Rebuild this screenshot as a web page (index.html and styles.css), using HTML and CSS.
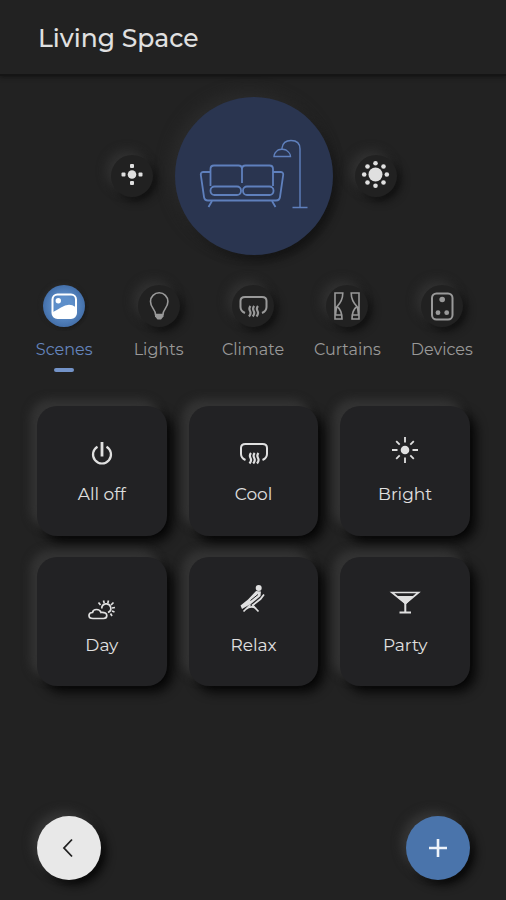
FILE: index.html
```html
<!DOCTYPE html>
<html lang="en">
<head>
<meta charset="utf-8">
<meta name="viewport" content="width=device-width, initial-scale=1">
<title>Living Space</title>
<link rel="stylesheet" href="styles.css">
</head>
<body>
<svg class="defs" aria-hidden="true">
  <symbol id="climate" viewBox="0 0 42 42">
    <path d="M13 28Q8.500 26 8.500 22V16Q8.500 12 13 12H30Q34.500 12 34.500 16V22Q34.500 26 30 28" stroke-width="2"/>
    <path d="M18.500 21q-2 2.500 -.5 5t-1 5.500M22.200 21q-2 2.500 -.5 5t-1 5.500M26 21q-2 2.500 -.5 5t-1 5.500" stroke-width="2.200"/>
  </symbol>
</svg>
<div class="app">
  <header class="topbar"><h1>Living Space</h1></header>
  <main>
    <section class="hero">
      <button class="round" aria-label="Dim">
        <svg viewBox="0 0 42 42"><g class="solid"><circle cx="21" cy="19.500" r="4.300"/><rect x="19" y="9" width="4" height="4" rx="1"/><rect x="19" y="26" width="4" height="4" rx="1"/><rect x="10.500" y="17.500" width="4" height="4" rx="1"/><rect x="27.500" y="17.500" width="4" height="4" rx="1"/></g></svg>
      </button>
      <div class="room">
        <svg viewBox="0 0 158 158">
          <g stroke-width="1.800">
            <path d="M35.500 89V72Q35.500 68.500 39 68.500H63.500Q67 68.500 67 72V86M67 72Q67 68.500 70.500 68.500H94.500Q98 68.500 98 72V89"/>
            <rect x="35.500" y="89.500" width="30.500" height="8.500" rx="4"/>
            <rect x="68" y="89.500" width="30.500" height="8.500" rx="4"/>
            <path d="M35.500 75H28.500Q25.500 75 25.800 78L29 100Q29.500 103.500 33 103.500H101Q104.500 103.500 105 100L108.200 78Q108.500 75 105.500 75H98"/>
            <path d="M37 104L33.500 110M97 104L100.500 110"/>
          </g>
          <g stroke-width="1.400">
            <path d="M107 52.500V51Q108 43.500 116 43.500Q125 43.500 125 52V110.500M117.500 110.500H132.500"/>
            <path d="M99 59.500Q99 56 103 53Q107 51.500 111 53Q115.500 56 115.500 59.500Z"/>
          </g>
        </svg>
      </div>
      <button class="round" aria-label="Brighten">
        <svg viewBox="0 0 42 42"><g class="solid" transform="translate(-.5 -1.500)"><circle cx="21" cy="21" r="7"/><circle cx="21" cy="9.700" r="2.300"/><circle cx="21" cy="32.300" r="2.300"/><circle cx="9.700" cy="21" r="2.300"/><circle cx="32.300" cy="21" r="2.300"/><circle cx="13" cy="13" r="2.300"/><circle cx="29" cy="13" r="2.300"/><circle cx="13" cy="29" r="2.300"/><circle cx="29" cy="29" r="2.300"/></g></svg>
      </button>
    </section>

    <nav class="tabs">
      <button class="tab active" aria-current="page">
        <span class="round"><svg viewBox="0 0 42 42"><rect x="9.500" y="9.500" width="23.500" height="23.500" rx="5" stroke-width="2"/><g class="solid"><circle cx="15.300" cy="15.700" r="2.700"/><path d="M10 27Q14 25 18 22.500Q26 17.500 32.500 22V29Q32.500 33 28 33H14Q10 33 10 29Z"/></g></svg></span>
        <span class="label">Scenes</span>
      </button>
      <button class="tab">
        <span class="round"><svg viewBox="0 0 42 42"><path d="M17.500 29.500C17.500 24 12.500 23 12.500 16.500A8.700 8.700 0 0 1 29.900 16.500C29.900 23 25 24 25 29.500Z" stroke-width="1.600"/><path class="solid" d="M17 29.500H25.500V31.500L23 34.500H19.500L17 31.500Z"/></svg></span>
        <span class="label">Lights</span>
      </button>
      <button class="tab">
        <span class="round"><svg viewBox="0 0 42 42"><use href="#climate" width="42" height="42"/></svg></span>
        <span class="label">Climate</span>
      </button>
      <button class="tab">
        <span class="round"><svg viewBox="0 0 42 42"><g stroke-width="1.600"><path d="M9 8H16.800C16.800 14 14.500 18 11 21.500C14.500 24 16 28 16 34H9ZM10.500 22L9.500 30M9.500 30H15.500"/><path d="M33 8H25.200C25.200 14 27.500 18 31 21.500C27.500 24 26 28 26 34H33ZM31.500 22L32.500 30M32.500 30H26.500"/></g></svg></span>
        <span class="label">Curtains</span>
      </button>
      <button class="tab">
        <span class="round"><svg viewBox="0 0 42 42"><rect x="11" y="8.500" width="20.500" height="26" rx="4.500" stroke-width="2"/><g class="solid"><circle cx="21.200" cy="14.500" r="2.800"/><circle cx="17" cy="27.700" r="2.400"/><circle cx="25.700" cy="27.700" r="2.400"/></g></svg></span>
        <span class="label">Devices</span>
      </button>
    </nav>

    <section class="scenes">
      <button class="card">
        <svg viewBox="0 0 40 40"><path d="M15.500 12.700A9 9 0 1 0 24.500 12.700" stroke-width="2.200"/><path d="M20 8V22.500" stroke-width="2.800"/></svg>
        <span>All off</span>
      </button>
      <button class="card">
        <svg viewBox="0 0 40 40"><use href="#climate" x="-1.500" y="-2" width="42" height="42"/></svg>
        <span>Cool</span>
      </button>
      <button class="card">
        <svg viewBox="0 0 40 40"><circle class="solid" cx="20" cy="16" r="4.300"/><path stroke-width="1.800" d="M20 3V8.500M20 23.500V29M7 16H12.500M27.500 16H33M11.200 7.200L14.700 10.700M25.300 21.300L28.800 24.800M28.800 7.200L25.300 10.700M14.700 21.300L11.200 24.800"/></svg>
        <span>Bright</span>
      </button>
      <button class="card">
        <svg viewBox="0 0 40 40"><g stroke-width="1.700"><path d="M11 33.500Q7 33.500 7 30.500Q7 27.500 10.500 27.500Q11 24.500 14.500 24.500Q18 24.500 19 27.500Q24.800 27 24.800 30.500Q24.800 33.500 21.500 33.500Z"/><path d="M19.800 23.500A4.500 4.500 0 1 1 26 27.500"/><path d="M16.500 17.500L18.500 20M21.500 15.500L22.200 18M26.500 15.500L25.800 18M31.500 17.500L29 20M33 22.500L30 23M32.500 27L30 26M30 31L28.500 28.500"/></g></svg>
        <span>Day</span>
      </button>
      <button class="card">
        <svg viewBox="0 0 40 40"><circle class="solid" cx="24.700" cy="3" r="3"/><path class="solid" d="M22 6L27 6.500L26.500 11L17.500 18.500L8 24L6.500 20.500L14 14.500Z"/><path d="M30 9.500L26.500 14L19 20" stroke-width="1.800"/><path d="M18 19.500L24.500 26.500M16.500 19.500L9.500 26.500M12 24Q17 20 22 23.500" stroke-width="1.700"/><path class="cut" d="M24 9.500L16.500 15.500"/></svg>
        <span>Relax</span>
      </button>
      <button class="card">
        <svg viewBox="0 0 40 40"><path d="M7 7.500H33.500L20.500 18.500Z" stroke-width="1.700"/><path class="solid" d="M11 11H29L22 18L20.500 19.500L19 18Z"/><path d="M20.300 18V27.500M14.500 27.500H26" stroke-width="2"/></svg>
        <span>Party</span>
      </button>
    </section>
  </main>
  <footer class="actions">
    <button class="fab back" aria-label="Back"><svg viewBox="0 0 64 64"><path d="M35 23.500L27 32L35 40.500" stroke-width="1.800"/></svg></button>
    <button class="fab add" aria-label="Add"><svg viewBox="0 0 64 64"><path d="M32 23V41M23 32H41" stroke-width="2.600"/></svg></button>
  </footer>
</div>
</body>
</html>
```

FILE: styles.css
```css
* {
  box-sizing: border-box;
}

body {
  margin: 0;
  background: #222222;
  color: #e0e0e0;
  font-family: Montserrat, Inter, "Open Sans", sans-serif;
}

button {
  margin: 0;
  padding: 0;
  border: 0;
  background: none;
  color: inherit;
  font: inherit;
  cursor: pointer;
}

svg {
  display: block;
  overflow: visible;
  fill: none;
  stroke: currentColor;
}

.solid {
  fill: currentColor;
  stroke: none;
}

.cut {
  stroke: #222224;
  stroke-width: 1;
}

.defs {
  position: absolute;
  width: 0;
  height: 0;
}

.app {
  display: flex;
  flex-direction: column;
  min-height: 100vh;
}

.topbar {
  padding: 20px 38px 18px;
  border-bottom: 2px solid #151515;
  box-shadow: 0 1px 4px #141414;
}

h1 {
  margin: 0;
  font-size: 25px;
  font-weight: 500;
  line-height: 36px;
}

.hero {
  display: flex;
  justify-content: center;
  align-items: center;
  gap: 22px;
  padding: 21px 0 0 2px;
}

.round {
  display: block;
  width: 42px;
  height: 42px;
  border-radius: 50%;
  background: #212121;
  box-shadow: -5px -5px 10px #303030, 4px 4px 9px #101010;
}

.room {
  width: 158px;
  height: 158px;
  border-radius: 50%;
  background: #2a3550;
  color: #5f80bd;
  box-shadow: -5px -5px 14px #2b2b2b, 4px 5px 10px #111111;
}

.tabs {
  display: grid;
  grid-template-columns: repeat(5, 1fr);
  padding: 30px 17px 0;
}

.tab {
  display: flex;
  flex-direction: column;
  align-items: center;
  color: #999999;
}

.tab::after {
  content: "";
  width: 20px;
  height: 4px;
  margin-top: 8px;
  border-radius: 2px;
}

.label {
  margin-top: 13px;
  font-size: 16px;
  line-height: 20px;
}

.active {
  color: #6585bd;
}

.active::after {
  background: #7393c8;
}

.active .round {
  background: radial-gradient(#5e8fca 30%, #416ca6 75%);
  color: #ffffff;
  box-shadow: -1px -1px 4px #2b2b2b, 1px 1px 3px #151515;
}

.scenes {
  display: grid;
  grid-template-columns: repeat(3, 1fr);
  gap: 21px 22px;
  padding: 34px 36px 34px 37px;
}

.card {
  display: flex;
  flex-direction: column;
  align-items: center;
  aspect-ratio: 1;
  padding-top: 28px;
  border-radius: 20px;
  background: #222224;
  box-shadow: -7px -7px 9px #333333, 6px 6px 11px #060606;
  font-size: 17px;
  line-height: 24px;
}

.card svg {
  width: 40px;
  height: 40px;
  margin-bottom: 8px;
}

.actions {
  display: flex;
  justify-content: space-between;
  margin-top: auto;
  padding: 0 36px 20px 37px;
}

.fab {
  width: 64px;
  height: 64px;
  border-radius: 50%;
  box-shadow: -5px -5px 10px #353535, 5px 5px 10px #080808;
}

.back {
  background: #e8e8e8;
  color: #202020;
}

.add {
  background: #4a74ab;
  color: #eef3fa;
}
```
